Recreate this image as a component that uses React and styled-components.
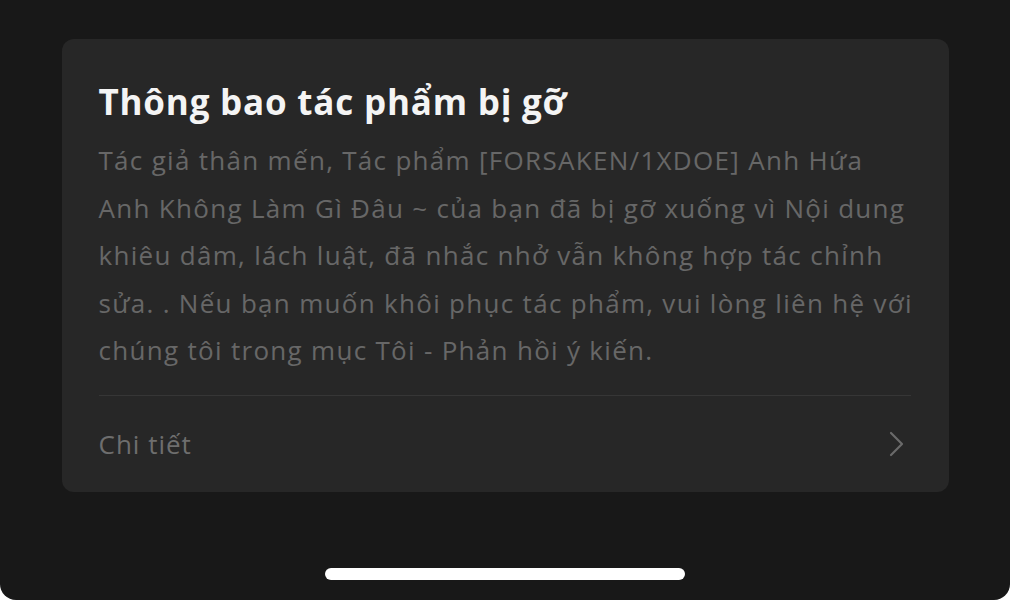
import React from 'react'
import styled, { createGlobalStyle } from 'styled-components'

const Global = createGlobalStyle`
  html, body {
    margin: 0;
    padding: 0;
    background: #ffffff;
  }
  * { box-sizing: border-box; }
`

const Screen = styled.div`
  width: 1010px;
  height: 600px;
  background: #181818;
  border-radius: 0 0 16px 16px;
  display: flex;
  flex-direction: column;
  align-items: center;
  font-family: "Open Sans", Lato, sans-serif;
  overflow: hidden;
`

const Card = styled.div`
  width: 887px;
  margin-top: 39px;
  background: #272727;
  border-radius: 12px;
  padding: 0 38px 0 37px;
  display: flex;
  flex-direction: column;
`

const Title = styled.h1`
  margin: 0;
  padding-top: 40px;
  font-size: 35px;
  line-height: 46px;
  font-weight: 700;
  letter-spacing: 0.8px;
  color: #f4f4f4;
`

const Body = styled.p`
  margin: 12px 0 0;
  font-size: 26px;
  line-height: 47.5px;
  letter-spacing: 1.3px;
  white-space: nowrap;
  color: #676767;
  padding-bottom: 20px;
  border-bottom: 1px solid #363636;
`

const Row = styled.div`
  height: 96px;
  display: flex;
  align-items: center;
  justify-content: space-between;
  font-size: 26px;
  letter-spacing: 1px;
  color: #6e6e6e;
`

const Chevron = styled.svg`
  width: 18px;
  height: 28px;
  margin-right: 5px;
`

const HomeBar = styled.div`
  width: 360px;
  height: 12px;
  border-radius: 6px;
  background: #ffffff;
  margin-top: auto;
  margin-bottom: 20px;
`

export default function App() {
  return (
    <>
      <Global />
      <Screen>
        <Card>
          <Title>Thông bao tác phẩm bị gỡ</Title>
          <Body>
            Tác giả thân mến, Tác phẩm [FORSAKEN/1XDOE] Anh Hứa<br />
            Anh Không Làm Gì Đâu ~ của bạn đã bị gỡ xuống vì Nội dung<br />
            khiêu dâm, lách luật, đã nhắc nhở vẫn không hợp tác chỉnh<br />
            sửa. . Nếu bạn muốn khôi phục tác phẩm, vui lòng liên hệ với<br />
            chúng tôi trong mục Tôi - Phản hồi ý kiến.
          </Body>
          <Row>
            <span>Chi tiết</span>
            <Chevron viewBox="0 0 18 28" fill="none">
              <path d="M3 3 L14 14 L3 25" stroke="#6a6a6a" strokeWidth="2.2" strokeLinecap="round" strokeLinejoin="round" />
            </Chevron>
          </Row>
        </Card>
        <HomeBar />
      </Screen>
    </>
  )
}
